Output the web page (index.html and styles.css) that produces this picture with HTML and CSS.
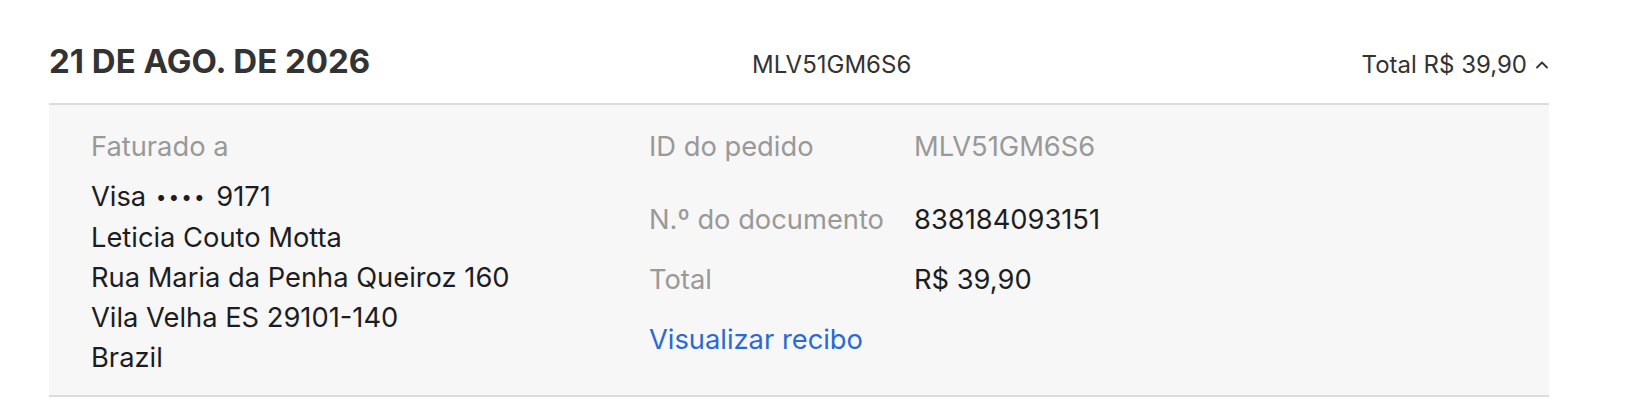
FILE: index.html
```html
<!DOCTYPE html>
<html lang="pt-BR">
<head>
  <meta charset="UTF-8">
  <meta name="viewport" content="width=device-width, initial-scale=1.0">
  <title>Histórico de compras</title>
  <link rel="stylesheet" href="styles.css">
</head>
<body>
  <div class="order">
    <div class="order-header">
      <h2 class="order-date">21 DE AGO. DE 2026</h2>
      <div class="order-id">MLV51GM6S6</div>
      <button class="order-toggle">
        Total R$ 39,90
        <svg class="chevron" width="14" height="10" viewBox="0 0 14 10">
          <path d="M2 7.5 L7 2.5 L12 7.5" fill="none" stroke="#333" stroke-width="1.8" stroke-linecap="round" stroke-linejoin="round"/>
        </svg>
      </button>
    </div>
    <div class="order-details">
      <div class="billing">
        <div class="label billing-label">Faturado a</div>
        <div>Visa <span class="card-dots">••••</span> 9171</div>
        <div>Leticia Couto Motta</div>
        <div>Rua Maria da Penha Queiroz 160</div>
        <div>Vila Velha ES 29101-140</div>
        <div>Brazil</div>
      </div>
      <dl class="summary">
        <dt class="label">ID do pedido</dt>
        <dd class="muted">MLV51GM6S6</dd>
        <dt class="label">N.º do documento</dt>
        <dd>838184093151</dd>
        <dt class="label">Total</dt>
        <dd>R$ 39,90</dd>
        <dt class="link-row"><a href="#" class="receipt-link">Visualizar recibo</a></dt>
      </dl>
    </div>
  </div>
</body>
</html>
```

FILE: styles.css
```css
body {
  margin: 0;
  padding: 0 83px 0 49px;
  background-color: #fff;
  font-family: Inter, "Noto Sans", sans-serif;
  color: #1d1d1f;
}
.order-header {
  display: grid;
  grid-template-columns: 703px 1fr auto;
  align-items: baseline;
  padding: 41px 0 21px;
}
.order-date {
  margin: 0;
  font-size: 33px;
  line-height: 41px;
  font-weight: 700;
  color: #333;
}
.order-id {
  font-size: 24px;
  color: #333;
}
.order-toggle {
  background: none;
  border: none;
  padding: 0;
  font-family: inherit;
  font-size: 24px;
  color: #333;
  cursor: pointer;
  display: flex;
  align-items: center;
  gap: 8px;
}
.order-details {
  display: grid;
  grid-template-columns: 558px 1fr;
  background-color: #f7f7f7;
  border-top: 2px solid #dcdcdc;
  border-bottom: 2px solid #dcdcdc;
  padding: 22px 42px 17px;
  font-size: 27.3px;
  line-height: 40px;
}
.label {
  color: #999;
}
.billing-label {
  margin-bottom: 10px;
}
.card-dots {
  font-size: 19px;
  letter-spacing: 2px;
  margin: 0 2px;
  vertical-align: 2px;
}
.summary {
  display: grid;
  grid-template-columns: 265px 1fr;
  row-gap: 20px;
  margin: 0;
  align-content: start;
}
.summary dd {
  margin: 0;
}
.summary dd.muted {
  color: #999;
  margin-bottom: 13px;
}
.summary dt:first-child {
  margin-bottom: 13px;
}
.link-row {
  grid-column: 1 / -1;
}
.receipt-link {
  color: #2a6ad2;
  text-decoration: none;
}
```
